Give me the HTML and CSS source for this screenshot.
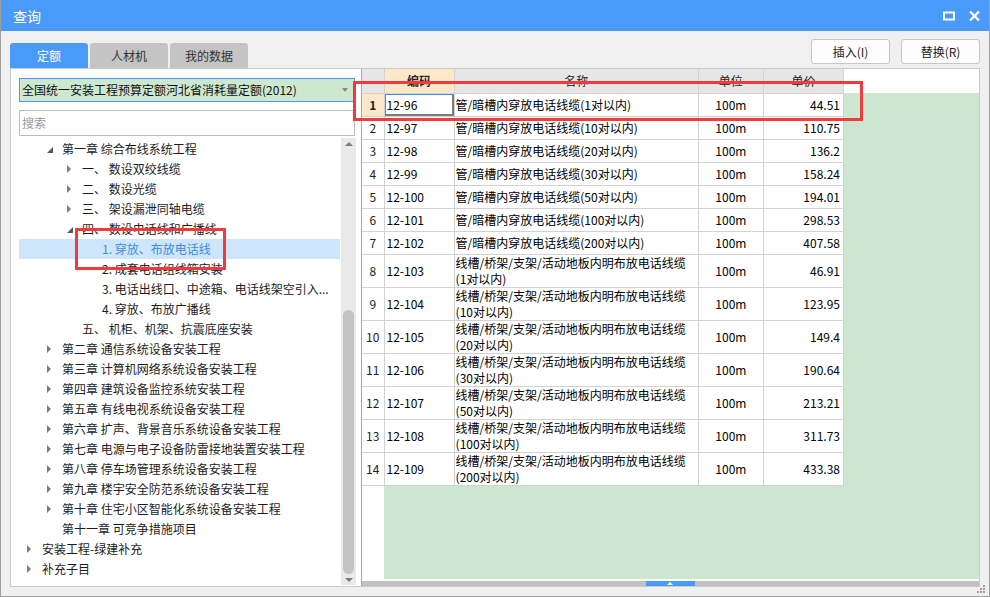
FILE: index.html
```html
<!DOCTYPE html>
<html lang="zh-CN">
<head>
<meta charset="utf-8">
<title>查询</title>
<link rel="stylesheet" href="styles.css">
</head>
<body>
<div class="window">
  <div class="titlebar">
    <span class="title">查询</span>
    <div class="win-ctrls">
      <svg class="ic-max" width="12" height="10" viewBox="0 0 12 10"><rect x="1" y="1.5" width="10" height="7" fill="none" stroke="#fff" stroke-width="2"/></svg>
      <svg class="ic-close" width="11" height="10" viewBox="0 0 11 10"><path d="M1 0.5 L10 9.5 M10 0.5 L1 9.5" stroke="#fff" stroke-width="2.2" fill="none"/></svg>
    </div>
  </div>

  <div class="toolbar">
    <div class="tabs">
      <div class="tab active">定额</div>
      <div class="tab">人材机</div>
      <div class="tab">我的数据</div>
    </div>
    <div class="actions">
      <button class="btn">插入(I)</button>
      <button class="btn">替换(R)</button>
    </div>
  </div>

  <div class="main">
    <div class="left">
      <div class="select">
        <span>全国统一安装工程预算定额河北省消耗量定额(2012)</span>
        <span class="caret"></span>
      </div>
      <div class="search">搜索</div>
      <div class="tree-wrap">
        <div class="tree">
          <div class="node l1"><span class="tw exp"></span>第一章 综合布线系统工程</div>
          <div class="node l2"><span class="tw col"></span>一、 数设双绞线缆</div>
          <div class="node l2"><span class="tw col"></span>二、 数设光缆</div>
          <div class="node l2"><span class="tw col"></span>三、 架设漏泄同轴电缆</div>
          <div class="node l2"><span class="tw exp"></span>四、 数设电话线和广播线</div>
          <div class="node l3 sel"><span class="tw"></span>1. 穿放、布放电话线</div>
          <div class="node l3"><span class="tw"></span>2. 成套电话组线箱安装</div>
          <div class="node l3"><span class="tw"></span>3. 电话出线口、中途箱、电话线架空引入...</div>
          <div class="node l3"><span class="tw"></span>4. 穿放、布放广播线</div>
          <div class="node l2"><span class="tw"></span>五、 机柜、机架、抗震底座安装</div>
          <div class="node l1"><span class="tw col"></span>第二章 通信系统设备安装工程</div>
          <div class="node l1"><span class="tw col"></span>第三章 计算机网络系统设备安装工程</div>
          <div class="node l1"><span class="tw col"></span>第四章 建筑设备监控系统安装工程</div>
          <div class="node l1"><span class="tw col"></span>第五章 有线电视系统设备安装工程</div>
          <div class="node l1"><span class="tw col"></span>第六章 扩声、背景音乐系统设备安装工程</div>
          <div class="node l1"><span class="tw col"></span>第七章 电源与电子设备防雷接地装置安装工程</div>
          <div class="node l1"><span class="tw col"></span>第八章 停车场管理系统设备安装工程</div>
          <div class="node l1"><span class="tw col"></span>第九章 楼宇安全防范系统设备安装工程</div>
          <div class="node l1"><span class="tw col"></span>第十章 住宅小区智能化系统设备安装工程</div>
          <div class="node l1"><span class="tw"></span>第十一章 可竞争措施项目</div>
          <div class="node l0"><span class="tw col"></span>安装工程-绿建补充</div>
          <div class="node l0"><span class="tw col"></span>补充子目</div>
        </div>
        <div class="vscroll">
          <span class="arr up"></span>
          <span class="thumb"></span>
          <span class="arr down"></span>
        </div>
      </div>
    </div>

    <div class="right">
      <div class="grid-body">
        <table class="grid">
          <colgroup>
            <col class="c-no"><col class="c-code"><col class="c-name"><col class="c-unit"><col class="c-price">
          </colgroup>
          <thead>
            <tr><th></th><th class="cur">编码</th><th>名称</th><th>单位</th><th>单价</th></tr>
          </thead>
          <tbody>
            <tr><td class="no cur">1</td><td class="code focus">12-96</td><td class="name">管/暗槽内穿放电话线缆(1对以内)</td><td class="unit">100m</td><td class="price">44.51</td></tr>
            <tr><td class="no">2</td><td class="code">12-97</td><td class="name">管/暗槽内穿放电话线缆(10对以内)</td><td class="unit">100m</td><td class="price">110.75</td></tr>
            <tr><td class="no">3</td><td class="code">12-98</td><td class="name">管/暗槽内穿放电话线缆(20对以内)</td><td class="unit">100m</td><td class="price">136.2</td></tr>
            <tr><td class="no">4</td><td class="code">12-99</td><td class="name">管/暗槽内穿放电话线缆(30对以内)</td><td class="unit">100m</td><td class="price">158.24</td></tr>
            <tr><td class="no">5</td><td class="code">12-100</td><td class="name">管/暗槽内穿放电话线缆(50对以内)</td><td class="unit">100m</td><td class="price">194.01</td></tr>
            <tr><td class="no">6</td><td class="code">12-101</td><td class="name">管/暗槽内穿放电话线缆(100对以内)</td><td class="unit">100m</td><td class="price">298.53</td></tr>
            <tr><td class="no">7</td><td class="code">12-102</td><td class="name">管/暗槽内穿放电话线缆(200对以内)</td><td class="unit">100m</td><td class="price">407.58</td></tr>
            <tr class="tall"><td class="no">8</td><td class="code">12-103</td><td class="name">线槽/桥架/支架/活动地板内明布放电话线缆<br>(1对以内)</td><td class="unit">100m</td><td class="price">46.91</td></tr>
            <tr class="tall"><td class="no">9</td><td class="code">12-104</td><td class="name">线槽/桥架/支架/活动地板内明布放电话线缆<br>(10对以内)</td><td class="unit">100m</td><td class="price">123.95</td></tr>
            <tr class="tall"><td class="no">10</td><td class="code">12-105</td><td class="name">线槽/桥架/支架/活动地板内明布放电话线缆<br>(20对以内)</td><td class="unit">100m</td><td class="price">149.4</td></tr>
            <tr class="tall"><td class="no">11</td><td class="code">12-106</td><td class="name">线槽/桥架/支架/活动地板内明布放电话线缆<br>(30对以内)</td><td class="unit">100m</td><td class="price">190.64</td></tr>
            <tr class="tall"><td class="no">12</td><td class="code">12-107</td><td class="name">线槽/桥架/支架/活动地板内明布放电话线缆<br>(50对以内)</td><td class="unit">100m</td><td class="price">213.21</td></tr>
            <tr class="tall"><td class="no">13</td><td class="code">12-108</td><td class="name">线槽/桥架/支架/活动地板内明布放电话线缆<br>(100对以内)</td><td class="unit">100m</td><td class="price">311.73</td></tr>
            <tr class="tall"><td class="no">14</td><td class="code">12-109</td><td class="name">线槽/桥架/支架/活动地板内明布放电话线缆<br>(200对以内)</td><td class="unit">100m</td><td class="price">433.38</td></tr>
          </tbody>
        </table>
      </div>
      <div class="hscroll"><span class="hthumb"></span></div>
    </div>
  </div>

  <svg class="grip" width="10" height="10" viewBox="0 0 10 10">
    <rect x="7" y="1" width="2" height="2" fill="#a0a0a0"/>
    <rect x="4" y="4" width="2" height="2" fill="#a0a0a0"/>
    <rect x="7" y="4" width="2" height="2" fill="#a0a0a0"/>
    <rect x="1" y="7" width="2" height="2" fill="#a0a0a0"/>
    <rect x="4" y="7" width="2" height="2" fill="#a0a0a0"/>
    <rect x="7" y="7" width="2" height="2" fill="#a0a0a0"/>
  </svg>

  <div class="mark mark-tree"></div>
  <div class="mark mark-row"></div>
</div>
</body>
</html>
```

FILE: styles.css
```css
* { box-sizing: border-box; }

html, body {
  margin: 0;
  padding: 0;
  background: #f0f0f0;
}

body {
  font-family: "Noto Sans CJK SC", "Noto Sans", sans-serif;
  font-size: 12px;
  color: #222;
}

.window {
  position: relative;
  width: 990px;
  height: 597px;
  border: 1px solid #9e9e9e;
  border-top: none;
  background: #f0f0f0;
  display: flex;
  flex-direction: column;
  overflow: hidden;
}

/* title bar */
.titlebar {
  height: 31px;
  background: #4a9af9;
  display: flex;
  align-items: center;
  justify-content: space-between;
  padding: 0 9px 0 12px;
  flex: none;
}
.title {
  color: #fff;
  font-size: 14px;
  line-height: 16px;
  padding-top: 1px;
}
.win-ctrls {
  display: flex;
  align-items: center;
  gap: 14px;
  padding-top: 1px;
}

/* toolbar with tabs and buttons */
.toolbar {
  height: 37px;
  flex: none;
  display: flex;
  justify-content: space-between;
  align-items: flex-start;
  padding: 0 9px;
}
.tabs {
  display: flex;
  gap: 2px;
  align-self: flex-end;
}
.tab {
  width: 78px;
  height: 25px;
  line-height: 25px;
  text-align: center;
  background: #c4c4c4;
  color: #333;
  border-radius: 3px 3px 0 0;
  font-size: 12px;
}
.tab.active {
  background: #4a9af9;
  color: #fff;
}
.actions {
  display: flex;
  gap: 11px;
  padding-top: 8px;
}
.btn {
  width: 79px;
  height: 25px;
  border: 1px solid #c6c6c6;
  border-radius: 3px;
  background: #fdfdfd;
  font-family: inherit;
  font-size: 12px;
  color: #222;
  padding: 0;
  line-height: 22px;
}

/* main area */
.main {
  flex: none;
  height: 519px;
  margin: 0 9px;
  border: 1px solid #cacaca;
  background: #fff;
  display: flex;
}

.left {
  width: 350px;
  flex: none;
  padding: 9px 5px 0 8px;
  display: flex;
  flex-direction: column;
}
.select {
  height: 24px;
  width: 336px;
  border: 1px solid #4a9af9;
  background: #cde8cf;
  display: flex;
  align-items: center;
  justify-content: space-between;
  padding: 0 6px 0 2px;
  font-size: 12px;
  color: #111;
  line-height: 16px;
}
.caret {
  width: 0;
  height: 0;
  border-left: 3px solid transparent;
  border-right: 3px solid transparent;
  border-top: 4px solid #8a8a8a;
}
.search {
  margin-top: 8px;
  height: 26px;
  width: 336px;
  border: 1px solid #bcbcbc;
  color: #9a9a9a;
  padding: 0 2px;
  line-height: 24px;
  font-size: 12px;
}

.tree-wrap {
  flex: 1;
  display: flex;
  margin-top: 2px;
  min-height: 0;
}
.tree {
  width: 323px;
  padding-top: 1px;
}
.node {
  height: 20px;
  line-height: 20px;
  white-space: nowrap;
  color: #1c1c1c;
  display: flex;
  align-items: center;
}
.node.l0 { padding-left: 4px; }
.node.l1 { padding-left: 24px; }
.node.l2 { padding-left: 44px; }
.node.l3 { padding-left: 64px; }
.node.sel {
  background: #cde6fb;
  color: #3b8de3;
}
.tw {
  width: 19px;
  height: 20px;
  flex: none;
  position: relative;
}
.tw.col::after {
  content: "";
  position: absolute;
  left: 4px;
  top: 6px;
  border-left: 4px solid #7c7c7c;
  border-top: 4px solid transparent;
  border-bottom: 4px solid transparent;
}
.tw.exp::after {
  content: "";
  position: absolute;
  left: 4px;
  top: 8px;
  border-bottom: 6px solid #585858;
  border-left: 6px solid transparent;
}

.vscroll {
  width: 15px;
  flex: none;
  margin-left: 1px;
  background: #e9e9e9;
  display: flex;
  flex-direction: column;
  align-items: center;
  margin-bottom: 1px;
}
.arr {
  width: 0;
  height: 0;
  border-left: 4px solid transparent;
  border-right: 4px solid transparent;
}
.arr.up {
  border-bottom: 4px solid #7c7c7c;
  margin-top: 4px;
}
.arr.down {
  border-top: 4px solid #7c7c7c;
  margin-bottom: 3px;
}
.thumb {
  width: 11px;
  height: 264px;
  margin-top: auto;
  margin-bottom: 4px;
  background: #c3c3c3;
  border-radius: 6px;
}

/* right grid */
.right {
  flex: 1;
  border-left: 1px solid #a9a9a9;
  display: flex;
  flex-direction: column;
  min-width: 0;
}
.grid-body {
  height: 510px;
  flex: none;
  background:
    linear-gradient(#fff, #fff) 0 0 / 100% 24px no-repeat,
    linear-gradient(#fff, #fff) 0 0 / 22px 100% no-repeat,
    #cce6cf;
}
.grid {
  border-collapse: collapse;
  table-layout: fixed;
  width: 482px;
  font-family: "Noto Sans CJK SC", sans-serif;
  font-size: 12px;
  color: #000;
  background: #fff;
}
.c-no { width: 22px; }
.c-code { width: 70px; }
.c-name { width: 244px; }
.c-unit { width: 65px; }
.c-price { width: 80px; }

.grid th,
.grid td {
  border: 1px solid #d2d2d2;
  padding: 0;
  white-space: nowrap;
  overflow: hidden;
}
.grid thead th {
  height: 24px;
  background: #e6e6e6;
  font-weight: normal;
  color: #222;
  text-align: center;
  line-height: 16px;
  border-top: none;
}
.grid thead th:first-child { border-left: none; }
.grid thead th.cur {
  background: #fde7c9;
  font-weight: bold;
}
.grid tbody tr { height: 23px; }
.grid tbody tr.tall { height: 33px; }
.grid tbody td:first-child { border-left: none; }
.grid td { line-height: 16px; }
.grid .no {
  text-align: center;
  color: #222;
}
.grid .no.cur {
  background: #fde7c9;
  font-weight: bold;
}
.grid .code { padding-left: 2px; }
.grid .code.focus {
  box-shadow: inset 1px 1px 0 #3d8ff0, inset -2px -2px 0 #7d7d7d;
}
.grid .name { padding-left: 1px; }
.grid .unit { text-align: center; }
.grid .price {
  text-align: right;
  padding-right: 3px;
}

.hscroll {
  height: 5px;
  margin-top: 2px;
  background: #c1c1c1;
  position: relative;
  display: flex;
}
.hthumb {
  margin-left: 284px;
  width: 49px;
  height: 5px;
  background: #4a9af9;
  position: relative;
}
.hthumb::after {
  content: "";
  position: absolute;
  left: 21px;
  top: 1px;
  border-left: 3px solid transparent;
  border-right: 3px solid transparent;
  border-bottom: 3px solid #fff;
}

.grip {
  position: absolute;
  right: 3px;
  bottom: 2px;
}

/* red annotation boxes drawn over the screenshot */
.mark {
  position: absolute;
  border: 3px solid #f2393b;
  pointer-events: none;
}
.mark-tree {
  left: 74px;
  top: 228px;
  width: 151px;
  height: 42px;
}
.mark-row {
  left: 352px;
  top: 81px;
  width: 510px;
  height: 40px;
}
```
